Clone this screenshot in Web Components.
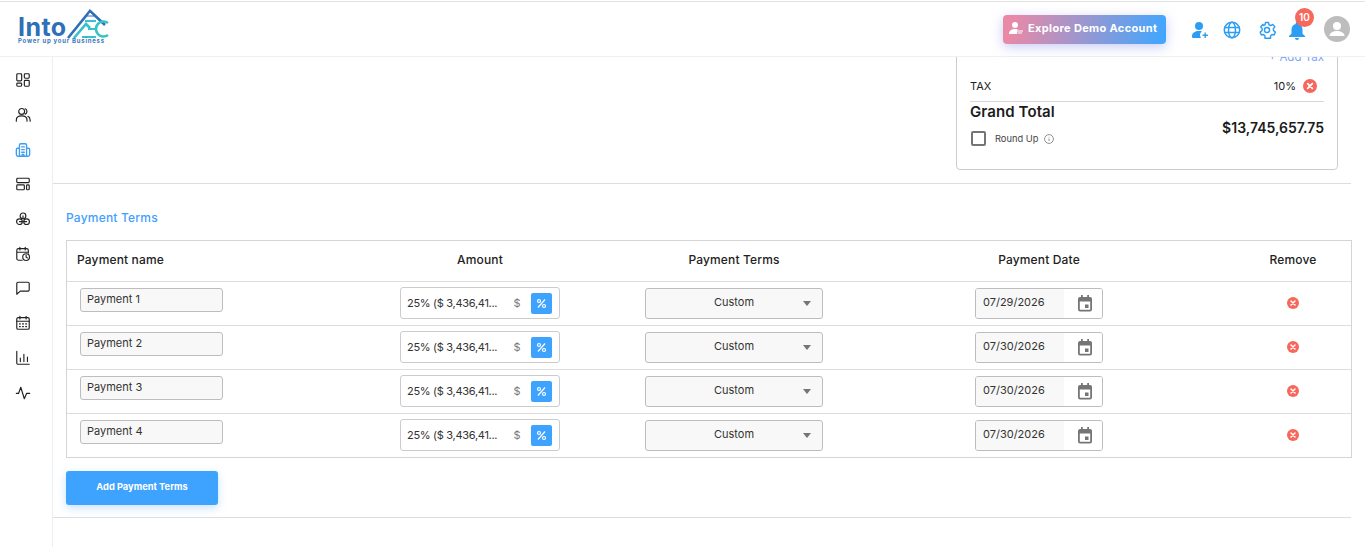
<!DOCTYPE html>
<html lang="en">
<head>
<meta charset="utf-8">
<title>Payment Terms</title>
<style>
    html, body { margin: 0; height: 100%; background: #fff; overflow: hidden; }
    body { font-family: "Inter", "Liberation Sans", sans-serif; color: #222; }
</style>
</head>
<body>
<app-shell>
    <app-header slot="header"></app-header>
    <app-sidebar slot="sidebar"></app-sidebar>
    <tax-card></tax-card>
    <payment-table>
        <payment-row name="Payment 1" date="07/29/2026"></payment-row>
        <payment-row name="Payment 2" date="07/30/2026"></payment-row>
        <payment-row name="Payment 3" date="07/30/2026"></payment-row>
        <payment-row name="Payment 4" date="07/30/2026"></payment-row>
    </payment-table>
</app-shell>

<script>
const removeIcon = size => `<svg width="${size}" height="${size}" viewBox="0 0 24 24"><circle cx="12" cy="12" r="12" fill="#f6675c"/><path d="M8 8l8 8M16 8l-8 8" stroke="#fff" stroke-width="3" stroke-linecap="round"/></svg>`

class AppShell extends HTMLElement {
    constructor() {
        super()
        this.attachShadow({ mode: 'open' })
        this.shadowRoot.innerHTML = `
            <style>
                :host { display: flex; flex-direction: column; height: 547px; overflow: hidden; }
                #body { display: flex; flex: 1; min-height: 0; }
                main { flex: 1; min-width: 0; overflow: hidden; display: flex; flex-direction: column; }
                hr { border: 0; border-top: 1px solid #dedede; margin: 0 14px 0 0; flex: none; }
                #card { display: flex; justify-content: flex-end; padding-right: 27px; height: 127px; flex: none; }
                h2 { margin: 26px 0 15px 13px; font-size: 12px; line-height: 15px; font-weight: 500; letter-spacing: .2px; color: #3fa0ff; }
                button {
                    display: block; flex: none; margin: 13px 0 12px 13px; width: 152px; height: 34px; padding: 0 0 3px; border: 0; border-radius: 3px;
                    background: #3ea2ff; color: #fff; font: 700 9.300px "Inter", "Liberation Sans", sans-serif;
                    box-shadow: 0 3px 8px rgba(62, 162, 255, .3);
                }
                #table { padding: 0 13px; }
            </style>
            <slot name="header"></slot>
            <div id="body">
                <slot name="sidebar"></slot>
                <main>
                    <div id="card"><slot></slot></div>
                    <hr>
                    <h2>Payment Terms</h2>
                    <div id="table"><slot name="table"></slot></div>
                    <button>Add Payment Terms</button>
                    <hr>
                </main>
            </div>
        `
    }
    connectedCallback() {
        this.querySelector('payment-table').slot = 'table'
    }
}

class AppHeader extends HTMLElement {
    constructor() {
        super()
        this.attachShadow({ mode: 'open' })
        this.shadowRoot.innerHTML = `
            <style>
                :host {
                    display: flex; align-items: center; box-sizing: border-box; height: 56px; margin-top: 1px;
                    border-top: 1px solid #e2e2e2; border-bottom: 1px solid #f0f0f0; margin-bottom: -1px;
                    padding: 0 15px 0 18px; background: #fff; position: relative; z-index: 2;
                }
                #logo { position: relative; width: 92px; height: 36px; align-self: flex-start; margin-top: 6px; }
                #into { font: 700 25px/20px "Inter", "Liberation Sans", sans-serif; color: #2f6fb7; position: absolute; left: 0; top: 9px; letter-spacing: .4px; }
                #aec { position: absolute; left: 49px; top: 0; }
                #tag { position: absolute; left: 0; top: 29px; font: 700 6px/8px "Inter", "Liberation Sans", sans-serif; color: #3b78bd; letter-spacing: .75px; white-space: nowrap; }
                #right { margin-left: auto; position: relative; height: 100%; width: 347px; }
                #demo {
                    position: absolute; left: 0; top: 13px; width: 163px; height: 29px; box-sizing: border-box; border-radius: 4px; padding: 0 0 3px 6px;
                    background: linear-gradient(100deg, #ea89a6 5%, #3ea7ff 100%); color: #fff; display: flex; align-items: center;
                    gap: 5px; font: 700 11px "Inter", "Liberation Sans", sans-serif; letter-spacing: .35px;
                    box-shadow: 0 3px 12px rgba(96, 110, 230, .35);
                }
                svg { display: block; flex: none; }
                .ic { position: absolute; top: 19px; }
                #badge {
                    position: absolute; left: 292px; top: 6px; width: 19px; height: 19px; border-radius: 50%; background: #f6675c;
                    color: #fff; font: 600 10px/19px "Inter", "Liberation Sans", sans-serif; text-align: center;
                }
                #avatar { position: absolute; left: 321px; top: 14px; }
            </style>
            <div id="logo">
                <span id="into">Into</span>
                <svg id="aec" width="44" height="32" viewBox="0 0 44 32">
                    <path d="M1 30L23 3l15 14" fill="none" stroke="#2f6fb7" stroke-width="2.600"/>
                    <path d="M20 8l3-4 4 4z" fill="#fff" stroke="#2f6fb7" stroke-width="1"/>
                    <path d="M7 30l12-14 4 4" fill="none" stroke="#36c2c9" stroke-width="2.600"/>
                    <path d="M18 13h11M21 21h8M15 29h14" fill="none" stroke="#36c2c9" stroke-width="2.200"/>
                    <path d="M41 15a7.500 7.500 0 1 0 0 12" fill="none" stroke="#36c2c9" stroke-width="2.600"/>
                </svg>
                <span id="tag">Power up your Business</span>
            </div>
            <div id="right">
                <div id="demo">
                    <svg width="14" height="14" viewBox="0 0 14 14" fill="#fff"><circle cx="6" cy="4" r="3"/><path d="M0 13c0-3.500 2.500-5 6-5 1 0 2 .1 2.800.4L8 13z"/><path d="M9 9.500h5v1H9zm0 2h4v1H9z"/></svg>
                    <span>Explore Demo Account</span>
                </div>
                <svg class="ic" style="left:188px" width="18" height="18" viewBox="0 0 18 18" fill="#2b9df2"><circle cx="8" cy="5" r="4"/><path d="M2 17c-1 0-1-1-1-2 0-3 3-5 7-5 1 0 2 .1 3 .5-1.500 1-2 2.500-2 3.500s.4 2.200 1 3z"/><path d="M13.500 11.500h1.400v2h2v1.400h-2v2h-1.400v-2h-2v-1.400h2z"/></svg>
                <svg class="ic" style="left:220px" width="18" height="18" viewBox="0 0 18 18" fill="none" stroke="#2b9df2" stroke-width="1.500"><circle cx="9" cy="9" r="7.700"/><ellipse cx="9" cy="9" rx="3.500" ry="7.700"/><path d="M1.700 6.500h14.600M1.700 11.500h14.600"/></svg>
                <svg class="ic" style="left:255px" width="18" height="18" viewBox="0 0 24 24" fill="none" stroke="#2b9df2" stroke-width="1.900" stroke-linejoin="round"><circle cx="12" cy="12" r="3.400"/><path d="M10 2h4l.6 3 2.400 1.100 2.700-1.600 2.700 3.400-2 2.300.3 2.600 2.400 1.900-1.500 3.800-3-.4-1.900 1.900.1 3H9.200l.1-3-1.900-1.900-3 .4-1.500-3.800 2.400-1.900.3-2.600-2-2.300 2.700-3.400L7 6.100 9.400 5z"/></svg>
                <svg class="ic" style="left:285px" width="18" height="19" viewBox="0 0 18 19" fill="#2b9df2"><path d="M9 1a1.300 1.300 0 0 1 1.300 1.300v.6c2.700.6 4.200 3 4.200 5.600v4.200L17 15v1H1v-1l2.500-2.300V8.500c0-2.600 1.500-5 4.200-5.600v-.6A1.300 1.300 0 0 1 9 1z"/><path d="M7 17h4a2 2 0 0 1-4 0z"/></svg>
                <span id="badge">10</span>
                <svg id="avatar" width="26" height="26" viewBox="0 0 26 26"><circle cx="13" cy="13" r="13" fill="#bdbdbd"/><circle cx="13" cy="10" r="4" fill="#fff"/><path d="M5.500 20c0-3.500 4-5 7.500-5s7.500 1.500 7.500 5z" fill="#fff"/></svg>
            </div>
        `
    }
}

const sideIcons = [
    '<rect x="2" y="2" width="5.500" height="8" rx="1"/><rect x="10.500" y="2" width="5.500" height="5" rx="1"/><rect x="2" y="12.500" width="5.500" height="3.500" rx="1"/><rect x="10.500" y="9.500" width="5.500" height="6.500" rx="1"/>',
    '<circle cx="7.500" cy="5" r="3.300"/><path d="M1.500 16v-1.500c0-3 2.500-4.500 6-4.500s6 1.500 6 4.500V16M11.500 2a3.300 3.300 0 0 1 0 6M14.500 10.500c1.500.6 2.500 2 2.500 4V16"/>',
    '<path d="M5 16V3.500A1.500 1.500 0 0 1 6.500 2h5A1.500 1.500 0 0 1 13 3.500V16zM5 7H3a1.500 1.500 0 0 0-1.500 1.500V14A2 2 0 0 0 3.500 16H5M13 7h2a1.500 1.500 0 0 1 1.500 1.500V14a2 2 0 0 1-2 2H13M7.500 5.500h3M7.500 8.500h3M7.500 11.500h3M8 16v-2h2v2"/>',
    '<rect x="2" y="2.500" width="14" height="5" rx="1"/><rect x="2" y="10" width="8.500" height="5.500" rx="1"/><rect x="13" y="10" width="3" height="5.500" rx="1"/>',
    '<circle cx="9" cy="5.500" r="3.200"/><circle cx="5" cy="12" r="3.200"/><circle cx="13" cy="12" r="3.200"/><path d="M9 5.500v3M5 12h3M13 12h-3"/>',
    '<path d="M8 16H4a2 2 0 0 1-2-2V5a2 2 0 0 1 2-2h9a2 2 0 0 1 2 2v3M2 7h13M5.500 1.500v3M11.500 1.500v3"/><circle cx="12.500" cy="12.500" r="3.800"/><path d="M12.500 10.500v2l1.500 1"/>',
    '<path d="M3.500 2.500h11a1.500 1.500 0 0 1 1.500 1.500v7a1.500 1.500 0 0 1-1.500 1.500H6L2.500 15.500l-.5.500V4a1.500 1.500 0 0 1 1.500-1.500z"/>',
    '<rect x="2" y="3" width="14" height="13" rx="1.500"/><path d="M2 7h14M5.500 1.500v3M12.500 1.500v3M5 10h1M8.500 10h1M12 10h1M5 13h1M8.500 13h1M12 13h1"/>',
    '<path d="M2 1.500V15a1 1 0 0 0 1 1h13M6 13V9M10 13V5M14 13V8"/>',
    '<path d="M1.500 9.500h2.500l2.500-7 4 13 2.500-6h3.500"/>',
]

class AppSidebar extends HTMLElement {
    constructor() {
        super()
        this.attachShadow({ mode: 'open' })
        this.shadowRoot.innerHTML = `
            <style>
                :host {
                    display: grid; grid-auto-rows: 34.700px; justify-items: center; align-items: center; align-content: start;
                    flex: none; box-sizing: border-box; width: 53px; height: 100%; padding: 7px 7px 0 0; border-right: 1px solid #eaeef7;
                }
                svg { display: block; fill: none; stroke: #222; stroke-width: 1.300; stroke-linecap: round; stroke-linejoin: round; }
                svg.on { stroke: #3d9df5; stroke-width: 1.500; }
            </style>
            ${sideIcons.map((p, i) => `<svg class="${i == 2 ? 'on' : ''}" width="16" height="16" viewBox="0 0 18 18">${p}</svg>`).join('')}
        `
    }
}

class TaxCard extends HTMLElement {
    constructor() {
        super()
        this.attachShadow({ mode: 'open' })
        this.shadowRoot.innerHTML = `
            <style>
                :host {
                    display: block; box-sizing: border-box; width: 382px; height: 128px; margin-top: -14px; padding: 7px 13px 0 13px;
                    border: 1px solid #ccc; border-radius: 4px; font-size: 11px; color: #222; flex: none;
                }
                #add { text-align: right; color: #7fa6f5; font-size: 11.500px; line-height: 14px; }
                #tax { display: flex; align-items: center; height: 30px; margin-top: 7px; border-bottom: 1px solid #d8d8d8; padding-right: 7px; }
                #tax span:first-child { flex: 1; }
                #tax span { margin-right: 7px; }
                svg { display: block; }
                #grand { display: flex; justify-content: space-between; }
                b { font-size: 14px; font-weight: 600; color: #1c1c1c; }
                #title { line-height: 20px; }
                #title b { font-size: 15px; letter-spacing: .1px; }
                #total { margin-top: 16px; line-height: 20px; }
                #round { display: flex; align-items: center; margin-top: 8px; font-size: 9.300px; color: #444; }
                #check { width: 11px; height: 11px; margin-left: 1px; border: 2px solid #757575; border-radius: 2px; margin-right: 9px; }
                #info { margin-left: 6px; }
            </style>
            <div id="add">+ Add Tax</div>
            <div id="tax"><span>TAX</span><span>10%</span>${removeIcon(14)}</div>
            <div id="grand">
                <div>
                    <div id="title"><b>Grand Total</b></div>
                    <div id="round">
                        <span id="check"></span>Round Up
                        <svg id="info" width="10" height="10" viewBox="0 0 10 10" fill="none" stroke="#777" stroke-width=".8"><circle cx="5" cy="5" r="4.400"/><path d="M5 4.500v2.500M5 2.800v.6"/></svg>
                    </div>
                </div>
                <div id="total"><b>$13,745,657.75</b></div>
            </div>
        `
    }
}

class PaymentTable extends HTMLElement {
    constructor() {
        super()
        this.attachShadow({ mode: 'open' })
        this.shadowRoot.innerHTML = `
            <style>
                :host { display: block; border: 1px solid #d4d4d4; }
                #head {
                    display: grid; grid-template-columns: 254px 318px 190px 420px 88px; box-sizing: border-box; height: 40px; padding-bottom: 3px; align-items: center;
                    font-size: 12px; font-weight: 500; letter-spacing: .15px; color: #222; text-align: center;
                }
                #head span:first-child { text-align: left; padding-left: 10px; }
            </style>
            <div id="head"><span>Payment name</span><span>Amount</span><span>Payment Terms</span><span>Payment Date</span><span>Remove</span></div>
            <slot></slot>
        `
    }
}

class PaymentRow extends HTMLElement {
    constructor() {
        super()
        this.attachShadow({ mode: 'open' })
        this.shadowRoot.innerHTML = `
            <style>
                :host {
                    display: grid; grid-template-columns: 254px 318px 190px 420px 88px; box-sizing: border-box; height: 44px;
                    border-top: 1px solid #dedede; font-size: 11px; color: #333; justify-items: center; align-items: start;
                }
                .box { box-sizing: border-box; border: 1px solid #bdbdbd; border-radius: 3px; background: #f8f8f8; }
                #name { justify-self: start; margin: 6px 0 0 13px; width: 143px; height: 24px; padding: 2px 6px; line-height: 16px; }
                #amount {
                    display: flex; align-items: center; margin-top: 5px; width: 160px; height: 32px; box-sizing: border-box; padding: 0 7px 0 6px;
                    border: 1px solid #ccc; border-radius: 3px; background: #fff; font-size: 11px;
                }
                #amount span:first-child { width: 100px; white-space: nowrap; letter-spacing: -.3px; }
                #cur { color: #777; width: 20px; text-align: center; }
                #pct {
                    margin-left: auto; width: 21px; height: 21px; border-radius: 2px; background: #3ea2ff;
                    display: flex; align-items: center; justify-content: center;
                }
                #terms { position: relative; margin-top: 6px; width: 178px; height: 31px; text-align: center; line-height: 27px; }
                #terms i {
                    position: absolute; right: 11px; top: 12px; border: 4px solid transparent; border-top: 5px solid #757575; border-bottom: 0;
                }
                #date { display: flex; margin-top: 6px; width: 128px; height: 31px; overflow: hidden; line-height: 27px; }
                #date span { width: 81px; padding-left: 7px; background: #f8f8f8; }
                #date div { flex: 1; background: #fff; display: flex; align-items: center; justify-content: center; padding: 0 0 2px 3px; }
                #remove { margin-top: 15px; }
                svg { display: block; }
            </style>
            <div id="name" class="box"></div>
            <div id="amount">
                <span>25% ($ 3,436,41...</span>
                <span id="cur">$</span>
                <span id="pct"><svg width="11" height="11" viewBox="0 0 11 11" fill="none" stroke="#fff" stroke-width="1.200"><circle cx="3" cy="3" r="1.500"/><circle cx="8" cy="8" r="1.500"/><path d="M9 1.500L2 9.500"/></svg></span>
            </div>
            <div id="terms" class="box">Custom<i></i></div>
            <div id="date" class="box">
                <span id="dt"></span>
                <div><svg width="18" height="18" viewBox="0 0 18 18" fill="#757575"><path d="M5 1h1.800v2h4.400V1H13v2h1a2 2 0 0 1 2 2v10.500a2 2 0 0 1-2 2H4a2 2 0 0 1-2-2V5a2 2 0 0 1 2-2h1zM3.800 7.500v8.200h10.400V7.500z"/><rect x="9" y="10.500" width="3.500" height="3.500"/></svg></div>
            </div>
            <div id="remove">${removeIcon(12)}</div>
        `
    }
    connectedCallback() {
        this.shadowRoot.getElementById('name').textContent = this.getAttribute('name')
        this.shadowRoot.getElementById('dt').textContent = this.getAttribute('date')
    }
}

customElements.define('app-shell', AppShell)
customElements.define('app-header', AppHeader)
customElements.define('app-sidebar', AppSidebar)
customElements.define('tax-card', TaxCard)
customElements.define('payment-table', PaymentTable)
customElements.define('payment-row', PaymentRow)
</script>
</body>
</html>
